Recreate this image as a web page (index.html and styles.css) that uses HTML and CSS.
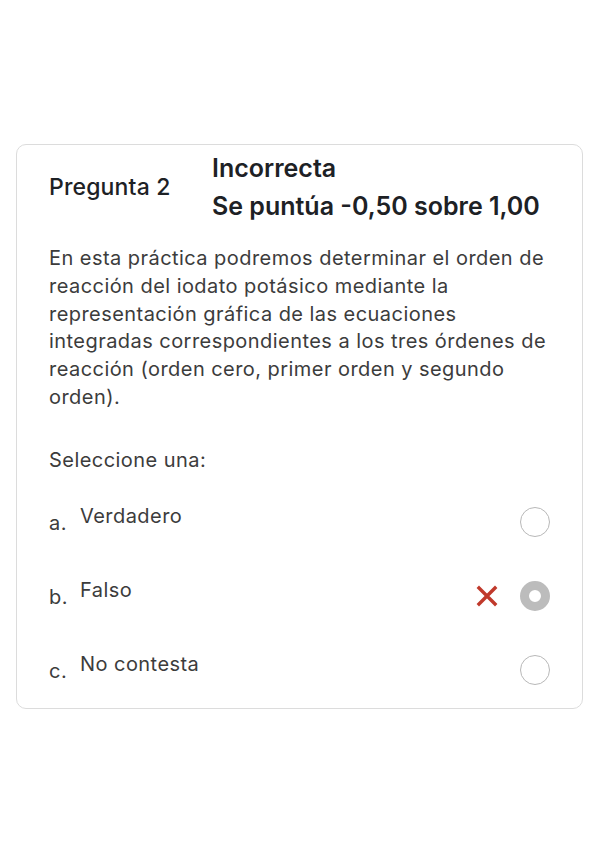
FILE: index.html
```html
<!DOCTYPE html>
<html lang="es">
<head>
    <meta charset="UTF-8">
    <meta name="viewport" content="width=device-width, initial-scale=1.0">
    <title>Pregunta 2</title>
    <link rel="stylesheet" href="styles.css">
</head>
<body>
    <div class="question">
        <div class="info">
            <h3 class="qno">Pregunta 2</h3>
            <div class="status">
                <div>Incorrecta</div>
                <div>Se puntúa -0,50 sobre 1,00</div>
            </div>
        </div>
        <p class="qtext">En esta práctica podremos determinar el orden de reacción del iodato potásico mediante la representación gráfica de las ecuaciones integradas correspondientes a los tres órdenes de reacción (orden cero, primer orden y segundo orden).</p>
        <p class="prompt">Seleccione una:</p>
        <div class="answers">
            <div class="answer">
                <span class="letter">a.</span>
                <span class="label">Verdadero</span>
                <span class="radio"></span>
            </div>
            <div class="answer">
                <span class="letter">b.</span>
                <span class="label">Falso</span>
                <svg class="wrong" width="22" height="22" viewBox="0 0 22 22">
                    <path d="M3 3 L19 19 M19 3 L3 19" stroke="#c0392b" stroke-width="3.4" stroke-linecap="square"/>
                </svg>
                <span class="radio checked"></span>
            </div>
            <div class="answer">
                <span class="letter">c.</span>
                <span class="label">No contesta</span>
                <span class="radio"></span>
            </div>
        </div>
    </div>
</body>
</html>
```

FILE: styles.css
```css
body {
    font-family: Inter, "Noto Sans", sans-serif;
    background-color: #fff;
    margin: 0;
    padding: 144px 16px 0;
}
.question {
    border: 1px solid #dcdcdc;
    border-radius: 10px;
    padding: 4px 32px 0;
    height: 565px;
    box-sizing: border-box;
}
.info {
    display: flex;
    align-items: center;
}
.qno {
    width: 163px;
    margin: 0;
    font-size: 23px;
    font-weight: 500;
    letter-spacing: 0.15px;
    color: #1d2125;
}
.status {
    font-size: 25px;
    font-weight: 600;
    line-height: 38px;
    color: #1d2125;
}
.qtext {
    margin: 20px 0 0;
    font-size: 20px;
    letter-spacing: 0.45px;
    line-height: 27.8px;
    color: #3c3c3c;
}
.prompt {
    margin: 34px 0 11px;
    font-size: 20px;
    letter-spacing: 0.45px;
    line-height: 28px;
    color: #3c3c3c;
}
.answer {
    display: flex;
    align-items: center;
    height: 74px;
    font-size: 20px;
    letter-spacing: 0.45px;
    color: #3c3c3c;
}
.letter {
    width: 31px;
    position: relative;
    top: 1px;
}
.label {
    flex: 1;
    position: relative;
    top: -6px;
}
.wrong {
    margin-right: 22px;
}
.radio {
    width: 30px;
    height: 30px;
    border: 1.5px solid #b8b8b8;
    border-radius: 50%;
    box-sizing: border-box;
}
.radio.checked {
    border: 9px solid #bcbcbc;
}
```
